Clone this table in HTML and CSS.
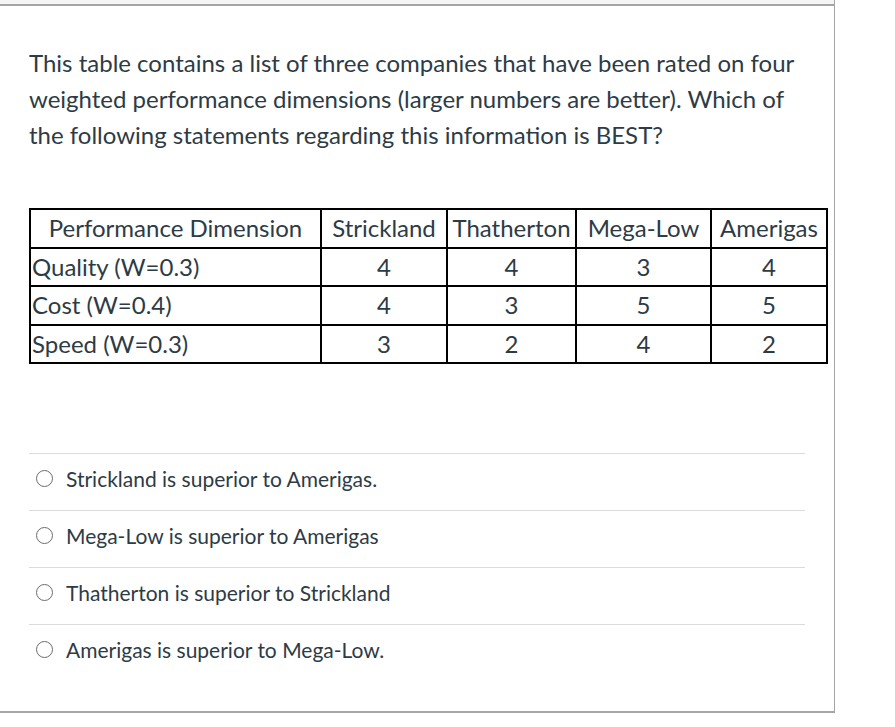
FILE: index.html
```html
<!DOCTYPE html>
<html>
<head>
<meta charset="utf-8">
<link rel="stylesheet" href="styles.css">
</head>
<body>
<div class="card">
  <div class="card-top"></div>
  <div class="card-body">
    <p class="question">This table contains a list of three companies that have been rated on four weighted performance dimensions (larger numbers are better). Which of the following statements regarding this information is BEST?</p>
    <table class="data">
      <thead>
        <tr><th>Performance Dimension</th><th>Strickland</th><th>Thatherton</th><th>Mega-Low</th><th>Amerigas</th></tr>
      </thead>
      <tbody>
        <tr><td class="label">Quality (W=0.3)</td><td>4</td><td>4</td><td>3</td><td>4</td></tr>
        <tr><td class="label">Cost (W=0.4)</td><td>4</td><td>3</td><td>5</td><td>5</td></tr>
        <tr><td class="label">Speed (W=0.3)</td><td>3</td><td>2</td><td>4</td><td>2</td></tr>
      </tbody>
    </table>
    <div class="answers">
      <label class="answer"><span class="radio"></span><span class="answer-text">Strickland is superior to Amerigas.</span></label>
      <label class="answer"><span class="radio"></span><span class="answer-text">Mega-Low is superior to Amerigas</span></label>
      <label class="answer"><span class="radio"></span><span class="answer-text">Thatherton is superior to Strickland</span></label>
      <label class="answer"><span class="radio"></span><span class="answer-text">Amerigas is superior to Mega-Low.</span></label>
    </div>
  </div>
</div>
</body>
</html>
```
FILE: styles.css
```css
html, body {
  margin: 0;
  padding: 0;
  background: #fff;
}
body {
  font-family: Lato, "Open Sans", sans-serif;
  color: #2d3b45;
}
.card {
  width: 835px;
  height: 713px;
  box-sizing: border-box;
  border-right: 1px solid #a5a5a5;
  border-bottom: 2px solid #a5a5a5;
  display: flex;
  flex-direction: column;
}
.card-top {
  height: 4px;
  background: #f5f5f5;
  border-bottom: 2px solid #a5a5a5;
}
.card-body {
  padding: 39px 0 0 29px;
}
.question {
  margin: 0;
  width: 790px;
  font-size: 24px;
  line-height: 36px;
}
.data {
  margin-top: 55px;
  border-collapse: collapse;
  font-size: 24px;
}
.data th, .data td {
  border: 2px solid #000;
  height: 36.5px;
  padding: 0 2px;
  text-align: center;
  font-weight: normal;
  line-height: 34px;
}
.data td.label {
  text-align: left;
  padding: 0 2px 0 1px;
}
.data th:nth-child(1) { width: 285px; }
.data th:nth-child(2) { width: 120px; }
.data th:nth-child(3) { width: 123px; }
.data th:nth-child(4) { width: 129px; }
.data th:nth-child(5) { width: 110px; }
.answers {
  margin-top: 89px;
  width: 776px;
  border-top: 1px solid #dcdcdc;
}
.answer {
  display: flex;
  align-items: center;
  height: 49px;
  padding-bottom: 7px;
  border-bottom: 1px solid #dcdcdc;
  font-size: 21px;
}
.answer:last-child {
  border-bottom: none;
}
.radio {
  width: 17px;
  height: 17px;
  border: 1.5px solid #6b6b6b;
  border-radius: 50%;
  margin: 0 13px 0 7px;
  box-sizing: border-box;
}
```
